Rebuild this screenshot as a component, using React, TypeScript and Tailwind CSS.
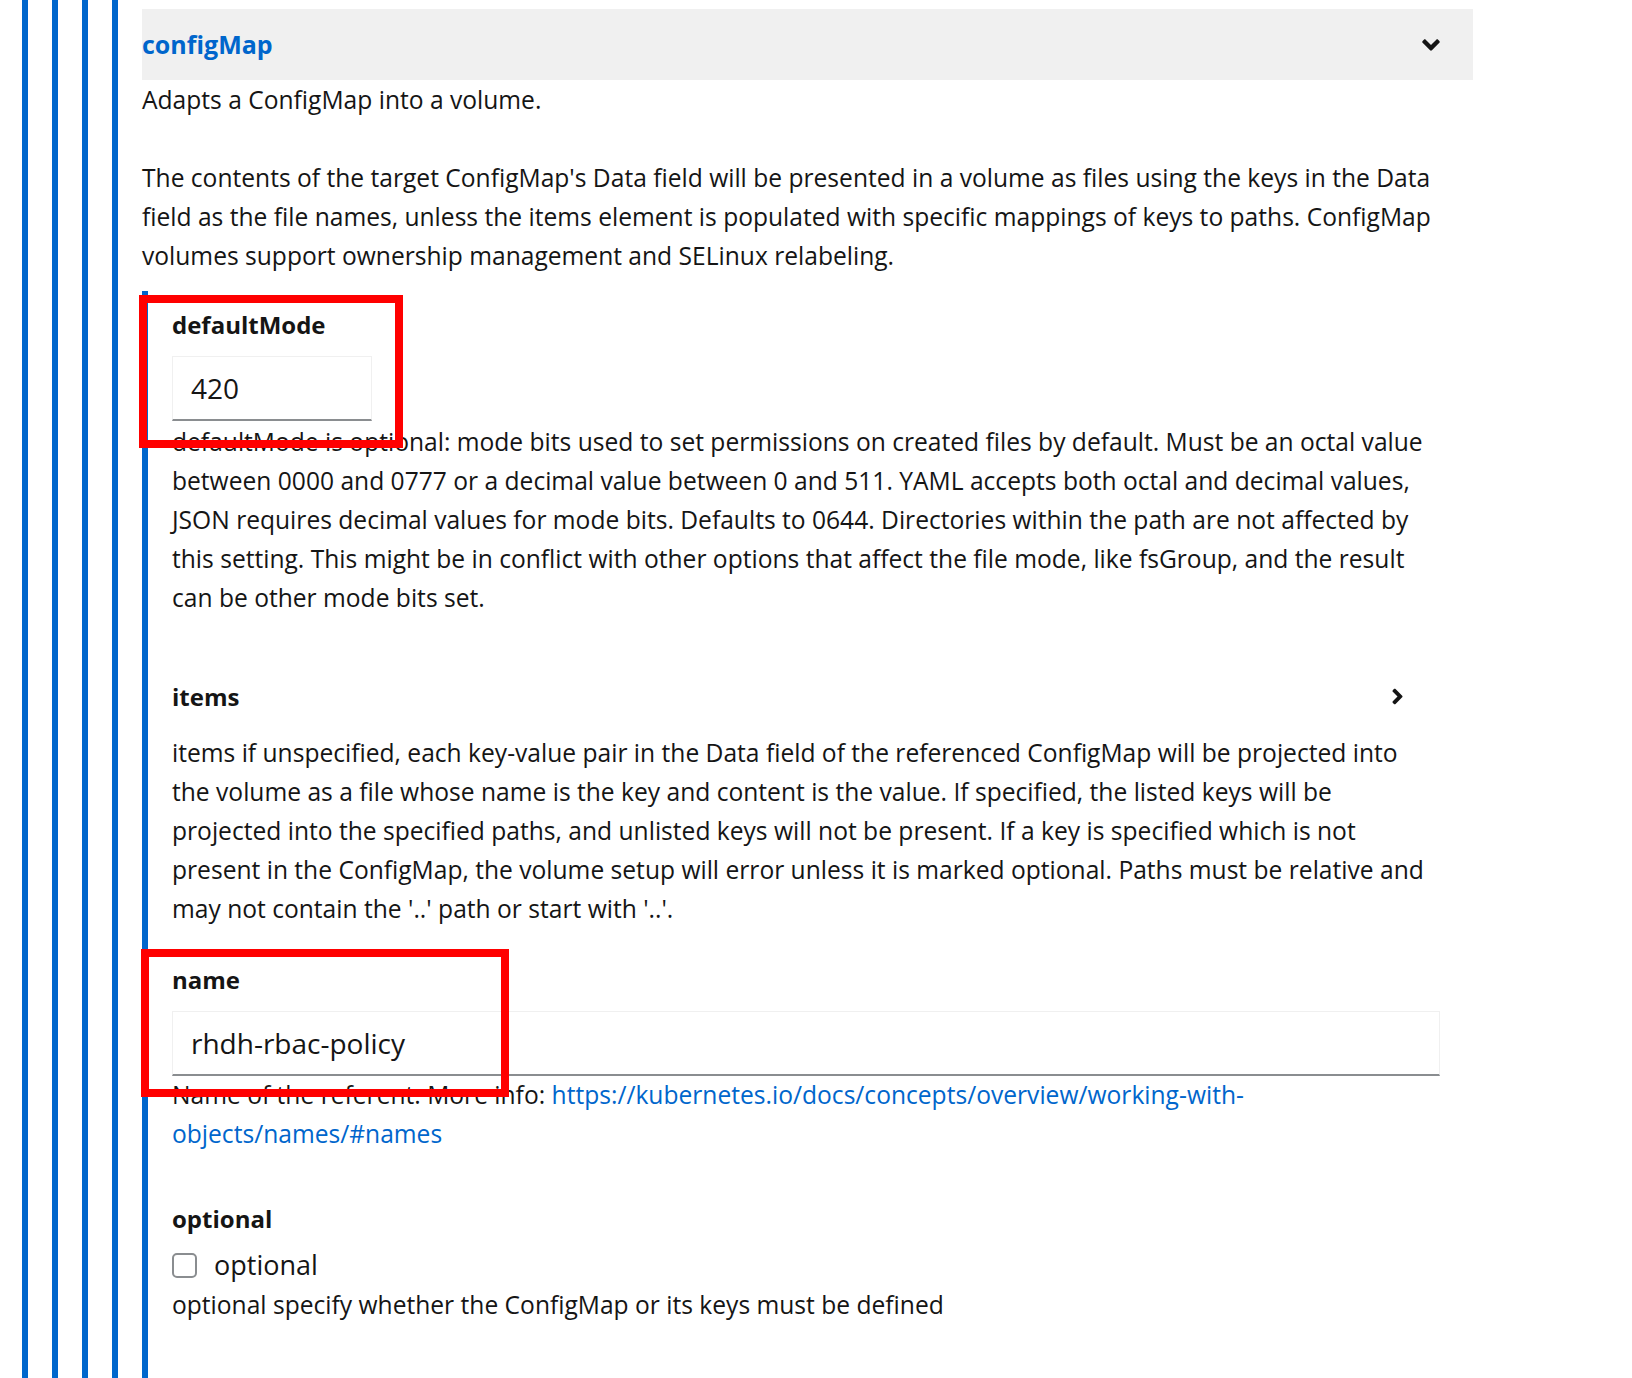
import React from 'react';
import { FaAngleDown, FaAngleRight } from 'react-icons/fa';

const font = { fontFamily: '"Open Sans", "Noto Sans", sans-serif' };

const intro =
  "Adapts a ConfigMap into a volume.\n\nThe contents of the target ConfigMap's Data field will be presented in a volume as files using the keys in the Data field as the file names, unless the items element is populated with specific mappings of keys to paths. ConfigMap volumes support ownership management and SELinux relabeling.";

const defaultModeHelp =
  'defaultMode is optional: mode bits used to set permissions on created files by default. Must be an octal value between 0000 and 0777 or a decimal value between 0 and 511. YAML accepts both octal and decimal values, JSON requires decimal values for mode bits. Defaults to 0644. Directories within the path are not affected by this setting. This might be in conflict with other options that affect the file mode, like fsGroup, and the result can be other mode bits set.';

const itemsHelp =
  "items if unspecified, each key-value pair in the Data field of the referenced ConfigMap will be projected into the volume as a file whose name is the key and content is the value. If specified, the listed keys will be projected into the specified paths, and unlisted keys will not be present. If a key is specified which is not present in the ConfigMap, the volume setup will error unless it is marked optional. Paths must be relative and may not contain the '..' path or start with '..'.";

const Nest: React.FC<{ children: React.ReactNode; className?: string }> = ({ children, className = '' }) => (
  <div className={`h-full border-l-[6px] border-[#0066cc] pl-[24px] ${className}`}>{children}</div>
);

const App: React.FC = () => {
  return (
    <div className="relative h-[1378px] overflow-hidden bg-white text-[#151515]" style={font}>
      {/* nested parent sections */}
      <div className="ml-[22px] h-full">
        <Nest>
          <Nest>
            <Nest>
              <Nest className="pt-[9px]">
                <div className="flex h-full w-[1331px] flex-col">
                  {/* configMap header */}
                  <button className="flex h-[71px] w-full shrink-0 items-center justify-between bg-[#f0f0f0] pr-[28px] text-left">
                    <span className="text-[25px] font-bold text-[#0066cc]">configMap</span>
                    <FaAngleDown className="text-[#151515]" size={28} />
                  </button>

                  <p className="whitespace-pre-line text-[24.6px] leading-[39px]">{intro}</p>

                  {/* configMap fields */}
                  <div className="mt-[16px] flex-1 border-l-[6px] border-[#0066cc] pl-[24px] pr-[33px] pt-[15px]">
                    <label className="block text-[24px] font-bold leading-[38px]">defaultMode</label>
                    <input
                      readOnly
                      value="420"
                      className="mt-[12px] h-[65px] w-[200px] border border-b-2 border-[#f0f0f0] border-b-[#8a8d90] px-[18px] text-[28px] outline-none"
                    />
                    <p className="mt-[1px] text-[24.6px] leading-[39px]">{defaultModeHelp}</p>

                    <div className="mt-[60px] flex h-[39px] items-center justify-between pr-[30px]">
                      <span className="text-[24px] font-bold">items</span>
                      <FaAngleRight size={25} />
                    </div>
                    <p className="mt-[17px] text-[24.6px] leading-[39px]">{itemsHelp}</p>

                    <label className="mt-[33px] block text-[24px] font-bold leading-[38px]">name</label>
                    <input
                      readOnly
                      value="rhdh-rbac-policy"
                      className="mt-[12px] h-[65px] w-full border border-b-2 border-[#f0f0f0] border-b-[#8a8d90] px-[18px] text-[28px] outline-none"
                    />
                    <p className="-mt-px text-[24.6px] leading-[39px]">
                      Name of the referent. More info:{' '}
                      <a href="#" className="text-[#0066cc]">
                        https://kubernetes.io/docs/concepts/overview/working-with-objects/names/#names
                      </a>
                    </p>

                    <label className="mt-[46px] block text-[24px] font-bold leading-[39px]">optional</label>
                    <label className="mt-[8px] flex h-[39px] items-center gap-[17px]">
                      <span className="h-[25px] w-[25px] rounded-[5px] border-2 border-[#8a8d90] bg-white" />
                      <span className="text-[27px]">optional</span>
                    </label>
                    <p className="text-[24.6px] leading-[39px]">
                      optional specify whether the ConfigMap or its keys must be defined
                    </p>
                  </div>
                </div>
              </Nest>
            </Nest>
          </Nest>
        </Nest>
      </div>

      {/* annotation boxes */}
      <div className="pointer-events-none absolute left-[139px] top-[295px] h-[153px] w-[264px] border-[8px] border-[#ff0000]" />
      <div className="pointer-events-none absolute left-[141px] top-[949px] h-[148px] w-[368px] border-[8px] border-[#ff0000]" />
    </div>
  );
};

export default App;
